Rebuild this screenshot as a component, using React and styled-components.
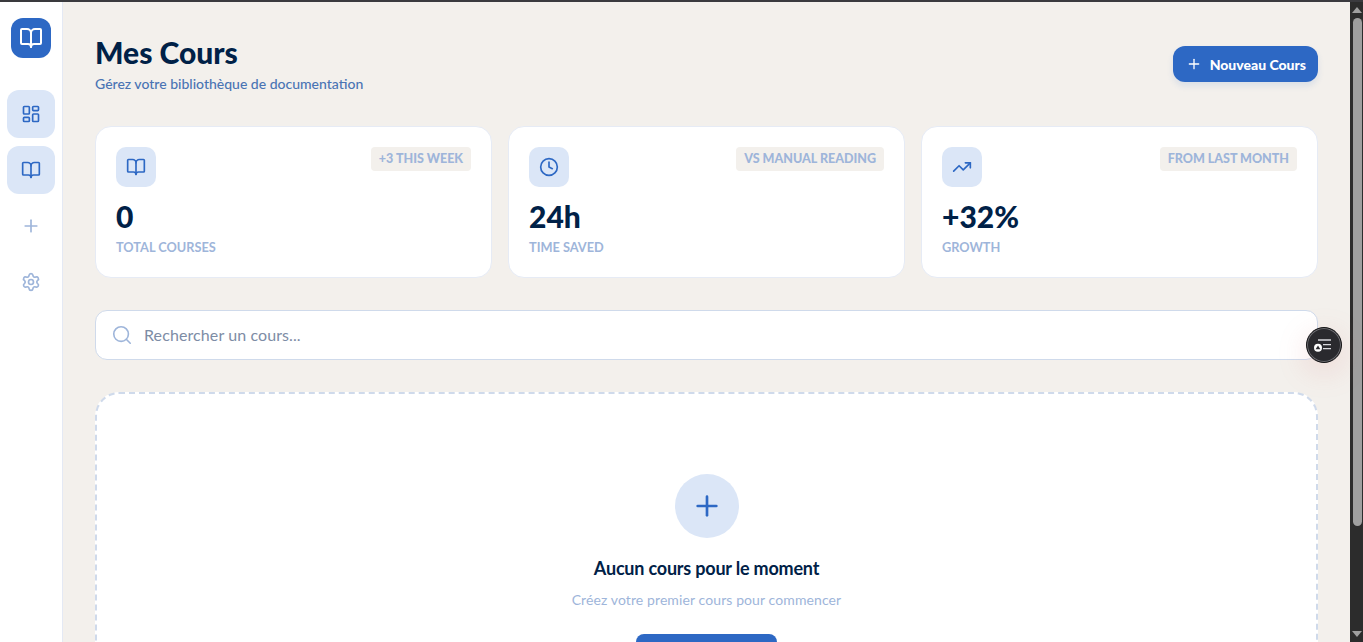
import React from "react";
import styled, { createGlobalStyle } from "styled-components";
import { BookOpen, Clock, LayoutDashboard, Plus, Search, Settings, TrendingUp } from "lucide-react";

const GlobalStyle = createGlobalStyle`
  html, body {
    margin: 0;
    height: 100%;
    overflow: hidden;
  }
  body {
    font-family: Lato, "Noto Sans", sans-serif;
    color: #002147;
  }
  * {
    box-sizing: border-box;
  }
`;

const stats = [
  { icon: BookOpen, badge: "+3 THIS WEEK", value: "0", label: "TOTAL COURSES" },
  { icon: Clock, badge: "VS MANUAL READING", value: "24h", label: "TIME SAVED" },
  { icon: TrendingUp, badge: "FROM LAST MONTH", value: "+32%", label: "GROWTH" },
];

const navItems = [
  { icon: LayoutDashboard, active: true },
  { icon: BookOpen, active: true },
  { icon: Plus },
  { icon: Settings },
];

const App = () => {
  return (
    <Window>
      <GlobalStyle />
      <Sidebar>
        <Logo>
          <BookOpen size={24} strokeWidth={2} />
        </Logo>
        <Nav>
          {navItems.map((item, i) => (
            <NavButton key={i} $active={item.active}>
              <item.icon size={20} strokeWidth={2} />
            </NavButton>
          ))}
        </Nav>
      </Sidebar>

      <Main>
        <Header>
          <div>
            <Title>Mes Cours</Title>
            <Subtitle>Gérez votre bibliothèque de documentation</Subtitle>
          </div>
          <PrimaryButton>
            <Plus size={16} strokeWidth={2} />
            Nouveau Cours
          </PrimaryButton>
        </Header>

        <StatGrid>
          {stats.map((s) => (
            <StatCard key={s.label}>
              <StatTop>
                <StatIcon>
                  <s.icon size={20} strokeWidth={2} />
                </StatIcon>
                <Badge>{s.badge}</Badge>
              </StatTop>
              <StatValue>{s.value}</StatValue>
              <StatLabel>{s.label}</StatLabel>
            </StatCard>
          ))}
        </StatGrid>

        <SearchBar>
          <Search size={22} strokeWidth={1.75} />
          <SearchInput placeholder="Rechercher un cours..." />
        </SearchBar>

        <EmptyState>
          <EmptyCircle>
            <Plus size={32} strokeWidth={2} />
          </EmptyCircle>
          <EmptyTitle>Aucun cours pour le moment</EmptyTitle>
          <EmptyText>Créez votre premier cours pour commencer</EmptyText>
          <EmptyButton>
            <Plus size={16} strokeWidth={2} />
            Créer un cours
          </EmptyButton>
        </EmptyState>
      </Main>

      <ScrollTrack>
        <ScrollArrow viewBox="0 0 12 8">
          <path d="M6 1 L11 7 L1 7 Z" />
        </ScrollArrow>
        <ScrollThumb />
        <ScrollArrow $down viewBox="0 0 12 8">
          <path d="M6 1 L11 7 L1 7 Z" />
        </ScrollArrow>
      </ScrollTrack>

      <FloatingWidget>
        <svg width="22" height="18" viewBox="0 0 22 18" fill="none">
          <path d="M5 4h13M10 8.7h8M10 12.7h8" stroke="#d8d8dc" strokeWidth="1.3" />
          <circle cx="5" cy="11.7" r="4" fill="#fff" />
          <path d="M5 9.4 L7.4 13.2 L2.6 13.2 Z" fill="#2a2a2e" />
        </svg>
      </FloatingWidget>
    </Window>
  );
};
export default App;

const Window = styled.div`
  position: relative;
  display: flex;
  height: 100vh;
  overflow: hidden;
  border-top: 2px solid #3a3a3e;
  background: #f3f0ec;
`;

const Sidebar = styled.aside`
  flex: 0 0 63px;
  display: flex;
  flex-direction: column;
  align-items: center;
  padding-top: 16px;
  background: #fff;
  border-right: 1px solid #e4e9f4;
`;

const Logo = styled.div`
  width: 40px;
  height: 40px;
  display: flex;
  align-items: center;
  justify-content: center;
  border-radius: 12px;
  background: #2d68c4;
  color: #fff;
`;

const Nav = styled.nav`
  display: flex;
  flex-direction: column;
  gap: 8px;
  margin-top: 32px;
`;

const NavButton = styled.button`
  width: 48px;
  height: 48px;
  display: flex;
  align-items: center;
  justify-content: center;
  padding: 0;
  border: none;
  border-radius: 12px;
  background: ${(p) => (p.$active ? "#dbe6f7" : "transparent")};
  color: ${(p) => (p.$active ? "#2d68c4" : "#9eb5da")};
`;

const Main = styled.main`
  flex: 1;
  min-width: 0;
  padding: 32px 32px 0;
`;

const Header = styled.header`
  display: flex;
  align-items: center;
  justify-content: space-between;
  margin-bottom: 32px;
`;

const Title = styled.h1`
  margin: 0;
  font-size: 30px;
  line-height: 36px;
  font-weight: 900;
  color: #002147;
`;

const Subtitle = styled.p`
  margin: 4px 0 0;
  font-size: 14px;
  line-height: 20px;
  font-weight: 500;
  color: #4a74b4;
`;

const PrimaryButton = styled.button`
  display: flex;
  align-items: center;
  gap: 8px;
  height: 36px;
  padding: 0 12px 0 13px;
  border: none;
  border-radius: 12px;
  background: #2d68c4;
  color: #fff;
  font-family: inherit;
  font-size: 14px;
  font-weight: 900;
  box-shadow: 0 4px 6px rgba(45, 104, 196, 0.12);
`;

const StatGrid = styled.section`
  display: grid;
  grid-template-columns: repeat(3, 1fr);
  gap: 16px;
  margin-bottom: 32px;
`;

const StatCard = styled.article`
  height: 152px;
  padding: 20px;
  background: #fff;
  border: 1px solid #e6ebf5;
  border-radius: 16px;
`;

const StatTop = styled.div`
  display: flex;
  align-items: flex-start;
  justify-content: space-between;
  margin-bottom: 11px;
`;

const StatIcon = styled.div`
  width: 40px;
  height: 40px;
  display: flex;
  align-items: center;
  justify-content: center;
  border-radius: 10px;
  background: #dbe6f7;
  color: #2d68c4;
`;

const Badge = styled.span`
  height: 24px;
  padding: 0 8px 2px;
  display: flex;
  align-items: center;
  border-radius: 4px;
  background: #f3f0ec;
  color: #9eb5da;
  font-size: 12.5px;
  font-weight: 900;
`;

const StatValue = styled.div`
  font-size: 30px;
  line-height: 36px;
  font-weight: 900;
  color: #002147;
`;

const StatLabel = styled.div`
  margin-top: 5px;
  font-size: 12.75px;
  line-height: 16px;
  font-weight: 700;
  color: #9eb5da;
`;

const SearchBar = styled.label`
  display: flex;
  align-items: center;
  gap: 11px;
  height: 50px;
  padding: 0 16px 0 15px;
  margin-bottom: 32px;
  background: #fff;
  border: 1px solid #cfdaeb;
  border-radius: 12px;
  color: #9eb5da;
`;

const SearchInput = styled.input`
  flex: 1;
  padding: 0 0 2px;
  border: none;
  outline: none;
  background: transparent;
  font-family: inherit;
  font-size: 16px;
  letter-spacing: 0.1px;
  color: #002147;

  &::placeholder {
    color: #7d8ca5;
    opacity: 1;
  }
`;

const EmptyState = styled.section`
  display: flex;
  flex-direction: column;
  align-items: center;
  height: 400px;
  padding-top: 80px;
  background: #fff;
  border: 2px dashed #cfdaeb;
  border-radius: 24px;
`;

const EmptyCircle = styled.div`
  width: 64px;
  height: 64px;
  display: flex;
  align-items: center;
  justify-content: center;
  border-radius: 50%;
  background: #dbe6f7;
  color: #2d68c4;
`;

const EmptyTitle = styled.h3`
  margin: 16px 0 0;
  font-size: 18px;
  line-height: 28px;
  font-weight: 700;
  letter-spacing: -0.2px;
  color: #002147;
`;

const EmptyText = styled.p`
  margin: 8px 0 0;
  font-size: 14px;
  line-height: 20px;
  letter-spacing: 0.1px;
  color: #9eb5da;
`;

const EmptyButton = styled.button`
  display: flex;
  align-items: center;
  justify-content: center;
  gap: 8px;
  width: 141px;
  height: 48px;
  margin-top: 24px;
  padding: 0;
  border: none;
  border-radius: 8px;
  background: #2d68c4;
  color: #fff;
  font-family: inherit;
  font-size: 14px;
  font-weight: 700;
`;

const ScrollTrack = styled.div`
  flex: 0 0 13px;
  display: flex;
  flex-direction: column;
  align-items: center;
  padding-left: 1px;
  background: #2c2c2c;
`;

const ScrollArrow = styled.svg`
  flex: 0 0 8px;
  width: 12px;
  height: 8px;
  margin: 4px 0;
  fill: #9f9f9f;
  transform: ${(p) => (p.$down ? "rotate(180deg)" : "none")};
`;

const ScrollThumb = styled.div`
  width: 9px;
  height: 508px;
  margin-bottom: auto;
  border-radius: 5px;
  background: #9f9f9f;
`;

const FloatingWidget = styled.div`
  position: absolute;
  left: 1306px;
  top: 325px;
  width: 36px;
  height: 36px;
  display: flex;
  align-items: center;
  justify-content: center;
  border-radius: 50%;
  background: #2a2a2e;
  border: 1px solid #151517;
  box-shadow: inset 0 0 0 1px #6d6d72, 0 8px 30px rgba(220, 120, 120, 0.22);
`;
